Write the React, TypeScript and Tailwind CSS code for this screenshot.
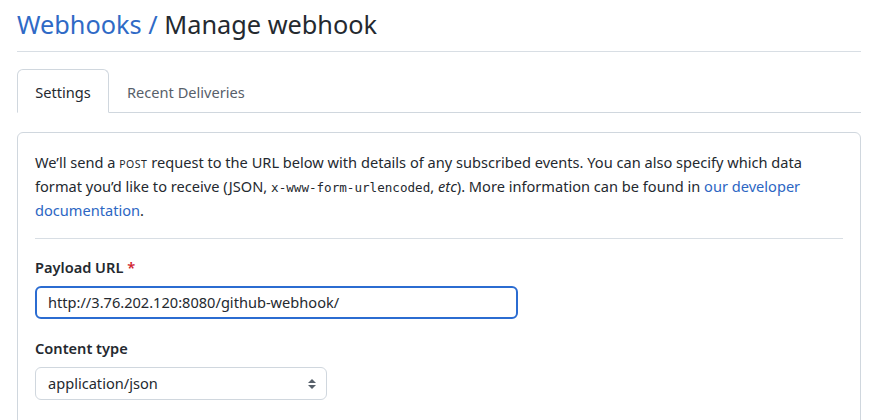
import React from "react";

export default function App() {
  const font = { fontFamily: '"Noto Sans", "Open Sans", sans-serif' };
  return (
    <div className="w-[873px] h-[420px] overflow-hidden bg-white text-[#24292f]" style={font}>
      <div className="ml-[17px] mr-[12px]">
        <div className="pt-[6px] pb-[9px] border-b border-[#d8dee4]">
          <h1 className="text-[25.3px] leading-[36px] font-normal">
            <span className="text-[#2f6ac6]">Webhooks /</span> Manage webhook
          </h1>
        </div>

        <div className="mt-[18px] flex items-end border-b border-[#d0d7de] h-[43px]">
          <div className="h-[44px] w-[92px] -mb-px pt-[3px] border border-[#d0d7de] border-b-white bg-white rounded-t-[6px] flex items-center justify-center text-[14.6px]">
            Settings
          </div>
          <div className="h-[42px] pt-[3px] px-[18px] flex items-center text-[14.6px] text-[#57606a]">
            Recent Deliveries
          </div>
        </div>

        <div className="mt-[19px] border border-[#d0d7de] rounded-[6px] px-[17px] pt-[17px] h-[320px]">
          <p className="text-[14.6px] leading-[24px] whitespace-nowrap">
            We’ll send a <span className="text-[10.5px] leading-[0] uppercase tracking-[0.5px]">post</span> request to the URL below with details of any subscribed events. You can also specify which data
            <br />
            format you’d like to receive (JSON,{" "}
            <code className="text-[12.6px] leading-[0]" style={{ fontFamily: '"DejaVu Sans Mono", monospace' }}>x-www-form-urlencoded</code>,{" "}
            <em>etc</em>). More information can be found in{" "}
            <a className="text-[#2c66c3]">our developer</a>
            <br />
            <a className="text-[#2c66c3]">documentation</a>.
          </p>
          <div className="mt-[16px] border-t border-[#d8dee4]" />

          <div className="mt-[18px]">
            <label className="block text-[14.6px] font-semibold leading-[20px]">
              Payload URL <span className="text-[#d1242f]">*</span>
            </label>
            <div className="mt-[9px] w-[483px] h-[33px] border-2 border-[#2b6cd1] rounded-[6px] flex items-center px-[11px] text-[14.6px]">
              http://3.76.202.120:8080/github-webhook/
            </div>
          </div>

          <div className="mt-[19px]">
            <label className="block text-[14.6px] font-semibold leading-[20px]">Content type</label>
            <div className="mt-[9px] w-[292px] h-[33px] border border-[#d0d7de] rounded-[6px] flex items-center justify-between pl-[12px] pr-[9px] text-[14.6px]">
              <span>application/json</span>
              <svg width="10" height="14" viewBox="0 0 10 14">
                <path d="M5 2 L9 6 H1 Z" fill="#57606a" />
                <path d="M5 12 L9 8 H1 Z" fill="#57606a" />
              </svg>
            </div>
          </div>
        </div>
      </div>
    </div>
  );
}
